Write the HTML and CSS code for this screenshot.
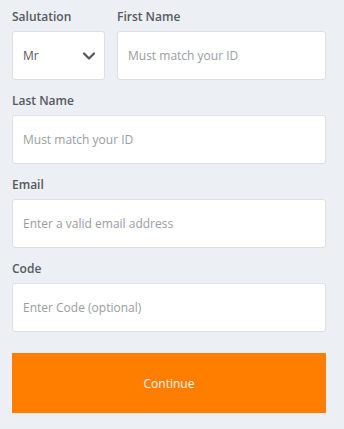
FILE: index.html
```html
<!DOCTYPE html>
<html lang="en">
<head>
<meta charset="utf-8">
<title>Form</title>
<link rel="stylesheet" href="styles.css">
</head>
<body>
<form class="form">
  <div class="row">
    <div class="field field-sal">
      <label class="label">Salutation</label>
      <div class="box select">
        <span class="value">Mr</span>
        <svg class="chev" width="14" height="10" viewBox="0 0 14 10"><path d="M2 2.5 L7 7.5 L12 2.5" fill="none" stroke="#555" stroke-width="2.2" stroke-linecap="round" stroke-linejoin="round"/></svg>
      </div>
    </div>
    <div class="field field-grow">
      <label class="label">First Name</label>
      <div class="box"><span class="ph">Must match your ID</span></div>
    </div>
  </div>
  <div class="field">
    <label class="label">Last Name</label>
    <div class="box"><span class="ph">Must match your ID</span></div>
  </div>
  <div class="field">
    <label class="label">Email</label>
    <div class="box"><span class="ph">Enter a valid email address</span></div>
  </div>
  <div class="field">
    <label class="label">Code</label>
    <div class="box"><span class="ph">Enter Code (optional)</span></div>
  </div>
  <button type="button" class="btn">Continue</button>
</form>
</body>
</html>
```
FILE: styles.css
```css
html, body {
  margin: 0;
  padding: 0;
  background: #eceff3;
}
body {
  font-family: "Open Sans", "Liberation Sans", sans-serif;
}
.form {
  padding: 9px 18px 0 12px;
  display: flex;
  flex-direction: column;
  gap: 13px;
}
.row {
  display: flex;
  gap: 12px;
}
.field {
  display: flex;
  flex-direction: column;
  gap: 6px;
}
.field-sal {
  width: 93px;
}
.field-grow {
  flex: 1;
}
.label {
  font-size: 12px;
  line-height: 16px;
  font-weight: 600;
  color: #555a60;
}
.box {
  box-sizing: border-box;
  height: 49px;
  background: #fff;
  border: 1px solid #dcdfe3;
  border-radius: 3px;
  display: flex;
  align-items: center;
  padding: 0 11px 0 10px;
}
.ph {
  font-size: 12px;
  color: #9a9da2;
}
.select {
  justify-content: space-between;
}
.value {
  font-size: 12px;
  color: #555a60;
}
.chev {
  display: block;
  margin-right: -3px;
}
.btn {
  margin-top: 8px;
  height: 60px;
  border: none;
  border-radius: 0;
  background: #ff7e00;
  color: #fff8ec;
  font-family: "Open Sans", "Liberation Sans", sans-serif;
  font-size: 12px;
  cursor: pointer;
}
```
